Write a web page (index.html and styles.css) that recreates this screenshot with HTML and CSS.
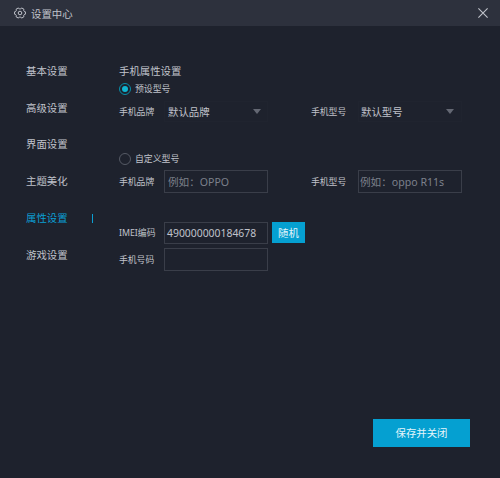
FILE: index.html
```html
<!DOCTYPE html>
<html lang="zh-CN">
<head>
<meta charset="utf-8">
<title>设置中心</title>
<link rel="stylesheet" href="styles.css">
</head>
<body>
<div class="window">
  <header class="titlebar">
    <svg class="gear" viewBox="0 0 12 12" fill="none" stroke="currentColor" stroke-width="1"><g transform="rotate(90 6 6)"><path d="M4.300 1.800 4.800.6h2.400l.5 1.200.8.5 1.300-.2L11 4.200 10.200 5.200v1.600l.8 1-1.200 2.100-1.300-.2-.8.5-.5 1.200H4.800l-.5-1.200-.8-.5-1.300.2L1 7.800l.8-1V5.200L1 4.200l1.200-2.100 1.300.2z"/></g><circle cx="6" cy="6" r="1.800"/></svg>
    <h1 class="title">设置中心</h1>
    <svg class="close" viewBox="0 0 10 10" fill="none" stroke="currentColor" stroke-width="1.100"><path d="M.4.4 9.600 9.600M9.600.4.4 9.600"/></svg>
  </header>
  <div class="content">
    <nav class="nav">
      <a class="nav-item">基本设置</a>
      <a class="nav-item">高级设置</a>
      <a class="nav-item">界面设置</a>
      <a class="nav-item">主题美化</a>
      <a class="nav-item active">属性设置</a>
      <a class="nav-item">游戏设置</a>
    </nav>
    <main class="panel">
      <h2 class="heading">手机属性设置</h2>
      <div class="option"><span class="radio checked"></span>预设型号</div>
      <div class="row select-row">
        <span class="label">手机品牌</span>
        <div class="select">默认品牌<span class="arrow"></span></div>
        <span class="label">手机型号</span>
        <div class="select model">默认型号<span class="arrow"></span></div>
      </div>
      <div class="option custom"><span class="radio"></span>自定义型号</div>
      <div class="row custom-row">
        <span class="label">手机品牌</span>
        <div class="field placeholder">例如：OPPO</div>
        <span class="label">手机型号</span>
        <div class="field placeholder model">例如：oppo R11s</div>
      </div>
      <div class="row imei-row">
        <span class="label">IMEI编码</span>
        <div class="field">490000000184678</div>
        <button class="button random">随机</button>
      </div>
      <div class="row phone-row">
        <span class="label">手机号码</span>
        <div class="field"></div>
      </div>
      <button class="button save">保存并关闭</button>
    </main>
  </div>
</div>
</body>
</html>
```
FILE: styles.css
```css
* { box-sizing: border-box; }

body {
  margin: 0;
  background: #1e222d;
  color: #c0c3cb;
  font: 10.4px/18px "Noto Sans", "Noto Sans CJK SC", sans-serif;
}

.window {
  display: flex;
  flex-direction: column;
  height: 478px;
}

.titlebar {
  display: flex;
  align-items: center;
  height: 26px;
  padding: 0 12px 0 14px;
  background: #2d313d;
}

.gear { width: 12px; height: 12px; margin-right: 5px; }

.title {
  margin: 2px 0 0;
  font-size: 10.4px;
  font-weight: 400;
}

.close { width: 10px; height: 10px; margin-left: auto; }

.content { display: flex; flex: 1; }

.nav {
  width: 119px;
  padding: 26.500px 26px 0;
}

.nav-item {
  display: flex;
  align-items: center;
  justify-content: space-between;
  width: 67px;
  height: 36.800px;
}

.nav-item.active { color: #0b9fd3; }

.nav-item.active::after {
  content: "";
  width: 1px;
  height: 9px;
  background: #0b9fd3;
}

.panel {
  display: flex;
  flex: 1;
  flex-direction: column;
  padding: 36px 30px 31px 0;
}

.heading {
  height: 18px;
  margin: 0;
  font-size: 10.4px;
  font-weight: 400;
}

.option {
  display: flex;
  align-items: center;
  gap: 4px;
  height: 18px;
  font-size: 8.900px;
}

.option.custom { margin-top: 24px; }

.radio {
  display: grid;
  place-items: center;
  width: 12px;
  height: 12px;
  border: 1px solid #555a65;
  border-radius: 50%;
}

.radio.checked { border-color: #078da9; }

.radio.checked::after {
  content: "";
  width: 6px;
  height: 6px;
  border-radius: 50%;
  background: #10b5d2;
}

.row {
  display: grid;
  grid-template-columns: 45px 104px 43px 47px 104px;
  align-items: center;
}

.row > :nth-child(3) { grid-column: 4; }

.label { font-size: 8.800px; white-space: nowrap; }

.select-row { height: 28px; padding-bottom: 1px; }
.custom-row { height: 23px; margin-top: 2px; }
.imei-row { height: 22px; margin-top: 29px; }
.phone-row { height: 23px; margin-top: 4px; }

.select {
  display: flex;
  align-items: center;
  justify-content: space-between;
  height: 21px;
  padding: 0 6px 0 3px;
  border: 1px solid #20242f;
}

.select.model { padding: 0 7px 0 2px; }

.arrow {
  border: 4.500px solid transparent;
  border-top: 5px solid #646873;
  border-bottom: 0;
}

.field {
  height: 100%;
  padding: 1px 2px 0;
  border: 1px solid #3a3e49;
  white-space: nowrap;
}

.placeholder {
  padding: 2px 3px 0;
  color: #7c808b;
  font-size: 10.600px;
}

.placeholder.model { padding-left: 1px; }

.button {
  padding: 0;
  border: 0;
  background: #05a0d1;
  color: #e4f5fb;
  font: inherit;
}

.row > .random {
  grid-column: 3;
  width: 33px;
  height: 21px;
  margin-left: 4px;
  align-self: start;
}

.save {
  width: 97px;
  height: 28px;
  margin-top: auto;
  align-self: flex-end;
}
```
